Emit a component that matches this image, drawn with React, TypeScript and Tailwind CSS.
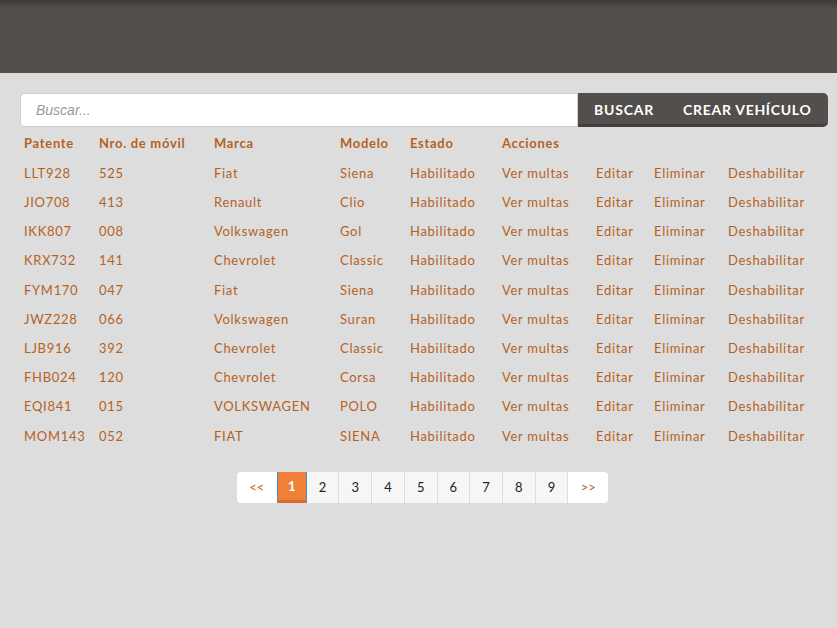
import React from "react";

const rows = [
  ["LLT928", "525", "Fiat", "Siena"],
  ["JIO708", "413", "Renault", "Clio"],
  ["IKK807", "008", "Volkswagen", "Gol"],
  ["KRX732", "141", "Chevrolet", "Classic"],
  ["FYM170", "047", "Fiat", "Siena"],
  ["JWZ228", "066", "Volkswagen", "Suran"],
  ["LJB916", "392", "Chevrolet", "Classic"],
  ["FHB024", "120", "Chevrolet", "Corsa"],
  ["EQI841", "015", "VOLKSWAGEN", "POLO"],
  ["MOM143", "052", "FIAT", "SIENA"],
];

const cols = "grid grid-cols-[75px_115px_126px_70px_92px_94px_58px_74px_100px]";

export default function App() {
  return (
    <div className="min-h-[628px] w-full bg-[#dddddd] text-[13px] text-[#b5621e]" style={{ fontFamily: "Lato, 'Open Sans', sans-serif" }}>
      <div className="h-[73px] bg-gradient-to-b from-[#3d3a38] via-[#524f4c] via-[12%] to-[#524f4c]" />
      <div className="px-[20px] pt-[20px]">
        <div className="flex h-[34px] w-[808px]">
          <div className="flex flex-1 items-center rounded-l-[5px] border border-[#cfcfcf] bg-white pl-[15px]">
            <span className="italic text-[14px] text-[#9a9a9a]" style={{ fontFamily: "'Liberation Sans', Arial, sans-serif" }}>Buscar...</span>
          </div>
          <div className="flex w-[250px] items-center rounded-r-[5px] border-b-[3px] border-[#424040] bg-[#524f4c] pt-[2px] text-[14px] font-bold text-white">
            <span className="pl-[16px] tracking-[0.8px]">BUSCAR</span>
            <span className="pl-[29px] tracking-[0.7px]">CREAR VEHÍCULO</span>
          </div>
        </div>
        <div className="pl-[4px] pt-[7px] tracking-[0.7px]">
          <div className={`${cols} h-[20px] items-center font-bold`}>
            <span>Patente</span>
            <span>Nro. de móvil</span>
            <span>Marca</span>
            <span>Modelo</span>
            <span>Estado</span>
            <span>Acciones</span>
          </div>
          <div className="pt-[5px]">
            {rows.map((r) => (
              <div key={r[0]} className={`${cols} h-[29.2px] items-center`}>
                <span>{r[0]}</span>
                <span>{r[1]}</span>
                <span>{r[2]}</span>
                <span>{r[3]}</span>
                <span>Habilitado</span>
                <span>Ver multas</span>
                <span>Editar</span>
                <span>Eliminar</span>
                <span>Deshabilitar</span>
              </div>
            ))}
          </div>
        </div>
        <div className="flex justify-center pt-[21px] pl-[8px]">
          <div className="flex h-[31px] overflow-hidden rounded-[4px] text-[13px]">
            <div className="flex w-[40px] items-center justify-center bg-white text-[#b5621e]">&lt;&lt;</div>
            <div className="flex w-[30px] items-center justify-center border-x border-[#3b8fd6] border-b-[3px] border-b-[#e06a2a] bg-[#ee8039] pt-[2px] font-bold text-white">1</div>
            {["2", "3", "4", "5", "6", "7", "8", "9"].map((n) => (
              <div key={n} className="flex w-[32.7px] items-center justify-center border-r border-[#dcdcdc] bg-[#f6f6f6] text-[#222]">{n}</div>
            ))}
            <div className="flex w-[40px] items-center justify-center bg-white text-[#b5621e]">&gt;&gt;</div>
          </div>
        </div>
      </div>
    </div>
  );
}
